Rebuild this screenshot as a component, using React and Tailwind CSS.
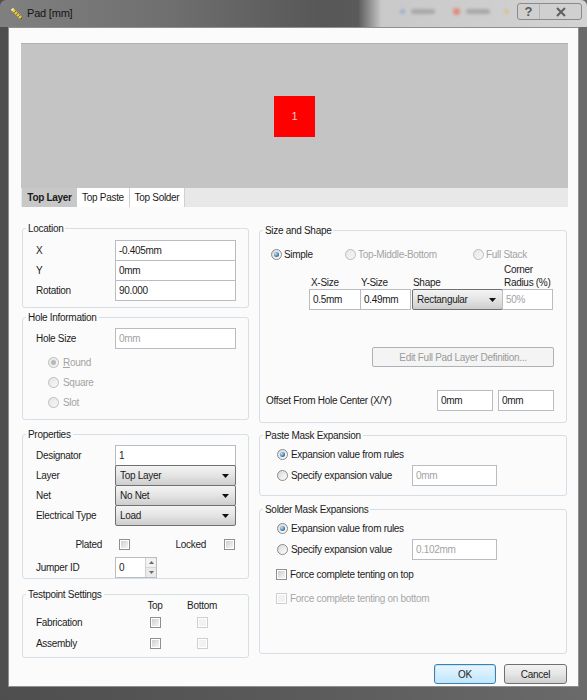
import React from 'react'

function Group({ title, className = '', inner = '', children }) {
  return (
    <fieldset className={`border border-[#d5dfe5] rounded-[3px] min-w-0 ${className}`}>
      <legend className="ml-[3px] px-[2px] leading-[13px]">{title}</legend>
      <div className={inner}>{children}</div>
    </fieldset>
  )
}

function Field({ value, w = 'w-[121px]', disabled, className = '' }) {
  return (
    <div
      className={`h-[21px] shrink-0 border border-[#b9bcc2] bg-white flex items-center pl-[3px] ${
        disabled ? 'text-[#a3a3a3]' : ''
      } ${w} ${className}`}
    >
      {value}
    </div>
  )
}

function Select({ value, w = 'w-[121px]', className = '' }) {
  return (
    <div
      className={`h-[21px] shrink-0 border border-[#707070] rounded-[2px] bg-linear-to-b from-[#f4f4f4] via-[#e4e4e4] to-[#cdcdcd] flex items-center justify-between pl-[4px] pr-[6px] ${w} ${className}`}
    >
      <span>{value}</span>
      <svg width="7" height="4" viewBox="0 0 7 4">
        <path d="M0 0h7L3.5 4z" fill="#111" />
      </svg>
    </div>
  )
}

function Radio({ checked, disabled }) {
  return (
    <span
      className={`w-[11px] h-[11px] shrink-0 rounded-full border flex items-center justify-center ${
        disabled
          ? 'border-[#bcbcbc] bg-linear-to-br from-[#e6e6e6] to-[#f7f7f7]'
          : 'border-[#8a8a8a] bg-linear-to-br from-[#d8d8d8] to-[#ffffff]'
      }`}
    >
      {checked && (
        <span
          className={`w-[5px] h-[5px] rounded-full ${
            disabled
              ? 'bg-[#b8b8b8]'
              : 'bg-[radial-gradient(circle_at_35%_35%,#c4e6ff,#2a6aa0_70%)]'
          }`}
        />
      )}
    </span>
  )
}

function Check({ disabled }) {
  return (
    <span
      className={`block w-[11px] h-[11px] shrink-0 border p-[1px] ${
        disabled ? 'border-[#cfcfcf]' : 'border-[#8e8f8f]'
      } bg-white`}
    >
      <span
        className={`block w-full h-full ${
          disabled ? 'bg-[#f2f2f2]' : 'bg-linear-to-br from-[#cfcfcf] to-[#f6f6f6]'
        }`}
      />
    </span>
  )
}

function Row({ label, children, className = '' }) {
  return (
    <div className={`flex items-center h-[21px] ${className}`}>
      <span className="w-[79px] shrink-0">{label}</span>
      {children}
    </div>
  )
}

function RadioRow({ label, checked, disabled, underline }) {
  return (
    <div className={`flex items-center h-[20px] ml-[12px] gap-[4px] ${disabled ? 'text-[#a3a3a3]' : ''}`}>
      <Radio checked={checked} disabled={disabled} />
      <span>
        {underline ? (
          <>
            <span className="underline">{label[0]}</span>
            {label.slice(1)}
          </>
        ) : (
          label
        )}
      </span>
    </div>
  )
}

function TitleIcon() {
  return (
    <svg width="13" height="13" viewBox="0 0 13 13">
      <path d="M1 3 L10 12 L12 12 L12 10 L3 1 Z" fill="#e8c93a" />
      <path d="M1 3 L3 1 L4 2 L2 4 Z" fill="#fff3a8" />
      <path d="M4 6 L6 4 M6 8 L8 6 M8 10 L10 8" stroke="#6b5a10" strokeWidth="0.8" />
      <path d="M10 12 L12 12 L12 10 Z" fill="#444" />
    </svg>
  )
}

export default function App() {
  return (
    <div className="w-[587px] h-[700px] flex flex-col overflow-hidden bg-linear-to-r from-[#4e4e4e] via-[#5a5a5a] to-[#6a6a6a] font-['Liberation_Sans',Arial,sans-serif] text-[10px] tracking-[-0.3px] text-[#1b1b1b]">
      {/* title bar */}
      <div className="h-[27px] shrink-0 flex items-start bg-[linear-gradient(90deg,#808080_0%,#6e6e6e_30%,#575757_55%,#5a5a5a_61%,#c9c9c9_65%,#d3d3d3_100%)] rounded-t-[6px]">
        <div className="flex items-center gap-[4px] pl-[10px] h-[27px]">
          <TitleIcon />
          <span className="text-[11px] tracking-[-0.2px] text-[#151515]">Pad [mm]</span>
        </div>
        <div className="ml-auto flex items-center h-[22px] gap-[6px] mr-[8px] blur-[1.5px]">
          <span className="w-[5px] h-[5px] rounded-full bg-[#9ab0d0]" />
          <span className="w-[24px] h-[5px] rounded-full bg-[#a8a8a8]" />
          <span className="w-[7px] h-[7px] rounded-full bg-[#e08a7a] ml-[12px]" />
          <span className="w-[24px] h-[5px] rounded-full bg-[#a8a8a8]" />
          <span className="w-[5px] h-[5px] rounded-full bg-[#d8c090] ml-[8px]" />
        </div>
        <div className="mt-[3px] mr-[5px] w-[65px] h-[17px] flex border border-[#8a8a8a] rounded-[3px] bg-[#cfcfcf]/60 text-[#5a5a5a] tracking-normal">
          <span className="w-[22px] flex items-center justify-center text-[13px] font-bold border-r border-[#b5b5b5]">?</span>
          <span className="flex-1 flex items-center justify-center">
            <svg width="12" height="10" viewBox="0 0 12 10">
              <path d="M2 1 L10 9 M10 1 L2 9" stroke="#5e5e5e" strokeWidth="2" />
            </svg>
          </span>
        </div>
      </div>

      {/* client area */}
      <div className="flex-1 mx-[8px] mb-[13px] bg-[#fbfbfb] border border-[#8f8f8f] pt-[15px] pl-[12px] pr-[10px] flex flex-col">
        {/* preview */}
        <div className="h-[145px] shrink-0 bg-[#c4c4c4] border-t border-[#b0b0b0] flex items-center justify-center">
          <div className="w-[41px] h-[41px] bg-[#ff0000] flex items-center justify-center text-[11px] text-[#ffc8c8]">1</div>
        </div>

        {/* tabs */}
        <div className="h-[19px] shrink-0 bg-[#e8e8e8] flex">
          <div className="ml-[1px] w-[55px] bg-[#c8c8c8] font-bold flex items-center justify-center">Top Layer</div>
          <div className="w-[53px] bg-white border-r border-[#d0d0d0] flex items-center justify-center">Top Paste</div>
          <div className="w-[55px] bg-white border-r border-[#d0d0d0] flex items-center justify-center">Top Solder</div>
        </div>

        {/* columns */}
        <div className="flex mt-[15px]">
          {/* left column */}
          <div className="w-[227px] ml-[1px] flex flex-col shrink-0">
            <Group title="Location" inner="pl-[13px] pr-[12px] pt-[5px] pb-[6px]">
              <Row label="X"><Field value="-0.405mm" /></Row>
              <Row label="Y" className="-mt-px"><Field value="0mm" /></Row>
              <Row label="Rotation" className="-mt-px"><Field value="90.000" /></Row>
            </Group>

            <Group title="Hole Information" className="mt-[3px]" inner="pl-[13px] pr-[12px] pt-[4px] pb-[7px]">
              <Row label="Hole Size"><Field value="0mm" disabled /></Row>
              <div className="mt-[3px]">
                <RadioRow label="Round" checked disabled underline />
                <RadioRow label="Square" disabled />
                <RadioRow label="Slot" disabled />
              </div>
            </Group>

            <Group title="Properties" className="mt-[8px]" inner="pl-[13px] pr-[12px] pt-[4px] pb-0">
              <Row label="Designator"><Field value="1" /></Row>
              <Row label="Layer" className="-mt-px"><Select value="Top Layer" /></Row>
              <Row label="Net" className="-mt-px"><Select value="No Net" /></Row>
              <Row label="Electrical Type" className="-mt-px"><Select value="Load" /></Row>
              <div className="flex items-center h-[20px] mt-[8px]">
                <span className="w-[66px] text-right">Plated</span>
                <span className="ml-[17px]"><Check /></span>
                <span className="w-[76px] text-right">Locked</span>
                <span className="ml-[18px]"><Check /></span>
              </div>
              <Row label="Jumper ID" className="mt-[3px]">
                <div className="h-[21px] w-[42px] border border-[#b9bcc2] bg-white flex">
                  <span className="flex-1 pl-[3px] flex items-center">0</span>
                  <div className="w-[11px] flex flex-col border-l border-[#d0d0d0]">
                    <span className="flex-1 flex items-center justify-center bg-[#f2f2f2] border-b border-[#d6d6d6]">
                      <svg width="5" height="3" viewBox="0 0 5 3"><path d="M0 3h5L2.5 0z" fill="#6a6a6a" /></svg>
                    </span>
                    <span className="flex-1 flex items-center justify-center bg-[#eaeaea]">
                      <svg width="5" height="3" viewBox="0 0 5 3"><path d="M0 0h5L2.5 3z" fill="#6a6a6a" /></svg>
                    </span>
                  </div>
                </div>
              </Row>
            </Group>

            <Group title="Testpoint Settings" className="mt-[9px]" inner="pl-[13px] pr-[12px] pb-[3px]">
              <div className="flex h-[10px] leading-[10px]">
                <span className="w-[107px]" />
                <span className="w-[24px] flex justify-center">Top</span>
                <span className="w-[24px] ml-[23px] flex justify-center whitespace-nowrap">Bottom</span>
              </div>
              {['Fabrication', 'Assembly'].map((t, i) => (
                <div key={t} className={`flex items-center h-[21px] ${i === 0 ? 'mt-[1px]' : ''}`}>
                  <span className="w-[107px]">{t}</span>
                  <span className="w-[24px] flex justify-center"><Check /></span>
                  <span className="w-[24px] ml-[23px] flex justify-center"><Check disabled /></span>
                </div>
              ))}
            </Group>
          </div>

          {/* right column */}
          <div className="w-[308px] ml-[10px] mt-[2px] flex flex-col shrink-0">
            <Group title="Size and Shape" inner="pt-[7px] pb-[11px]">
              <div className="flex items-center h-[20px]">
                <div className="ml-[11px] w-[74px] flex items-center gap-[2px]">
                  <Radio checked />
                  <span>Simple</span>
                </div>
                <div className="w-[128px] flex items-center gap-[2px] text-[#a3a3a3]">
                  <Radio disabled />
                  <span>Top-Middle-Bottom</span>
                </div>
                <div className="flex items-center gap-[2px] text-[#a3a3a3]">
                  <Radio disabled />
                  <span>Full Stack</span>
                </div>
              </div>
              <div className="flex items-end h-[25px] pl-[49px] leading-[13px]">
                <span className="w-[51px] pl-[2px]">X-Size</span>
                <span className="w-[52px] pl-[1px]">Y-Size</span>
                <span className="w-[91px] pl-[1px]">Shape</span>
                <span className="pl-[1px]">Corner<br />Radius (%)</span>
              </div>
              <div className="flex pl-[49px]">
                <Field value="0.5mm" w="w-[52px]" />
                <Field value="0.49mm" w="w-[51px]" className="-ml-px" />
                <Select value="Rectangular" w="w-[91px]" className="ml-[1px]" />
                <Field value="50%" w="w-[51px]" className="-ml-px" disabled />
              </div>
              <div className="mt-[37px] ml-[112px] w-[182px] h-[20px] border border-[#adb2b5] rounded-[2px] bg-[#f4f4f4] text-[#9a9a9a] flex items-center justify-center">
                Edit Full Pad Layer Definition...
              </div>
              <div className="mt-[23px] flex items-center pl-[6px]">
                <span className="w-[171px]">Offset From Hole Center (X/Y)</span>
                <Field value="0mm" w="w-[56px]" />
                <Field value="0mm" w="w-[56px]" className="ml-[5px]" />
              </div>
            </Group>

            <Group title="Paste Mask Expansion" className="mt-[6px]" inner="pt-[2px] pb-[9px] pl-[17px]">
              <div className="flex items-center h-[20px] gap-[3px]">
                <Radio checked />
                <span>Expansion value from rules</span>
              </div>
              <div className="flex items-center h-[21px] mt-[1px]">
                <div className="w-[135px] flex items-center gap-[3px]">
                  <Radio />
                  <span>Specify expansion value</span>
                </div>
                <Field value="0mm" w="w-[85px]" disabled />
              </div>
            </Group>

            <Group title="Solder Mask Expansions" className="mt-[7px]" inner="pt-[2px] pb-[45px] pl-[17px]">
              <div className="flex items-center h-[20px] gap-[3px]">
                <Radio checked />
                <span>Expansion value from rules</span>
              </div>
              <div className="flex items-center h-[21px] mt-[1px]">
                <div className="w-[135px] flex items-center gap-[3px]">
                  <Radio />
                  <span>Specify expansion value</span>
                </div>
                <Field value="0.102mm" w="w-[85px]" disabled />
              </div>
              <div className="flex items-center h-[20px] gap-[3px] mt-[4px] -ml-px">
                <Check />
                <span>Force complete tenting on top</span>
              </div>
              <div className="flex items-center h-[20px] gap-[3px] mt-[4px] -ml-px text-[#a8a8a8]">
                <Check disabled />
                <span>Force complete tenting on bottom</span>
              </div>
            </Group>
          </div>
        </div>

        {/* buttons */}
        <div className="flex justify-end gap-[8px] mt-[6px] mr-[1px]">
          <div className="w-[62px] h-[20px] rounded-[3px] border border-[#3c7fb1] bg-linear-to-b from-[#eaf6fd] to-[#bee6fd] shadow-[inset_0_0_0_1px_#c4e5f6] flex items-center justify-center">
            OK
          </div>
          <div className="w-[63px] h-[20px] rounded-[3px] border border-[#707070] bg-linear-to-b from-[#f2f2f2] via-[#e6e6e6] to-[#cfcfcf] flex items-center justify-center">
            Cancel
          </div>
        </div>
      </div>
    </div>
  )
}
